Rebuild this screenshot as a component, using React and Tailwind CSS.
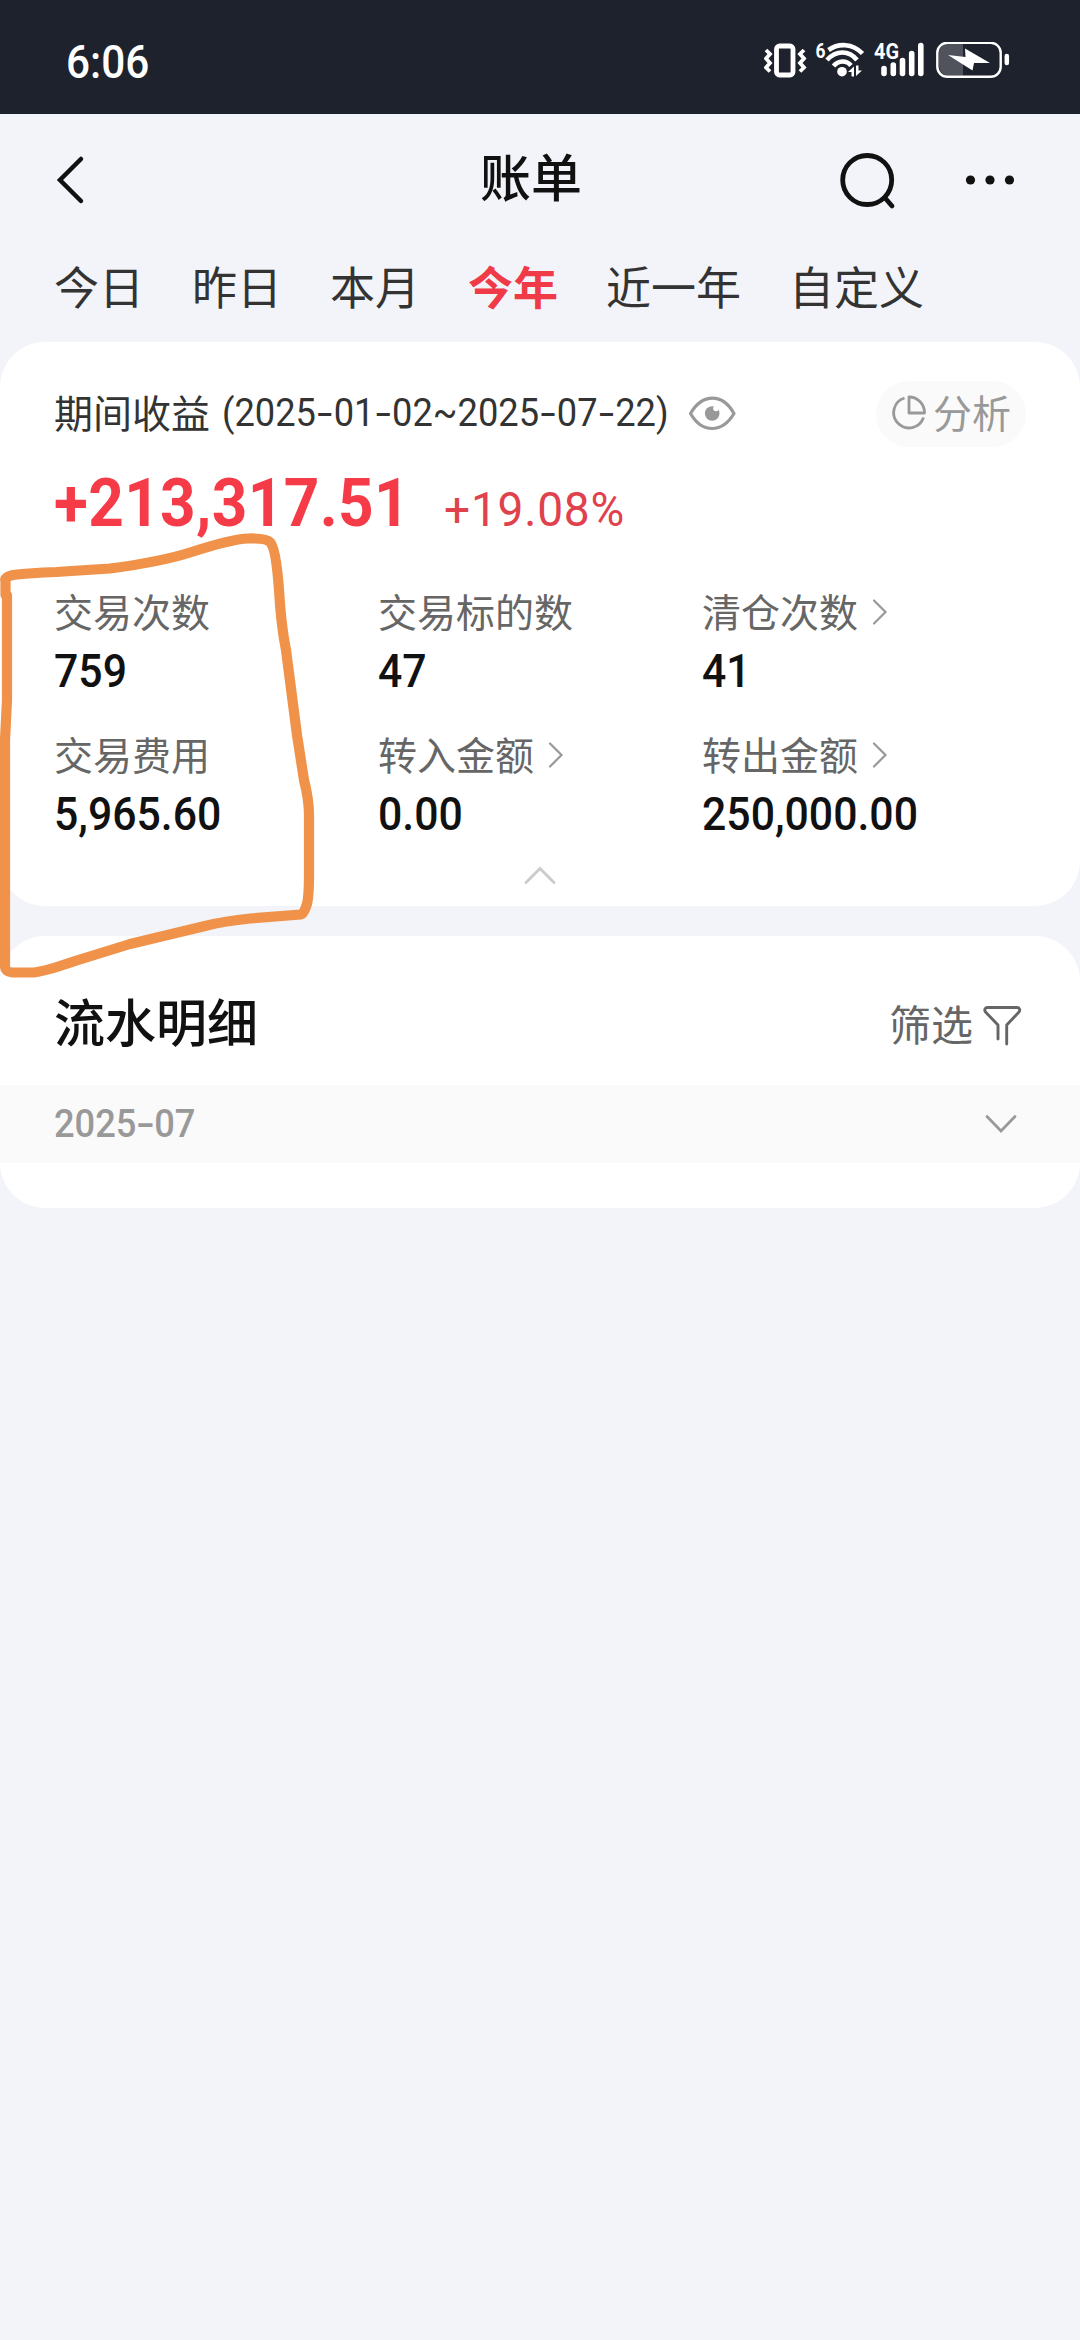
import React from "react";

const TABS = ["今日", "昨日", "本月", "今年", "近一年", "自定义"];
const STATS = [
  { label: "交易次数", value: "759" },
  { label: "交易标的数", value: "47" },
  { label: "清仓次数", value: "41", link: true },
  { label: "交易费用", value: "5,965.60" },
  { label: "转入金额", value: "0.00", link: true },
  { label: "转出金额", value: "250,000.00", link: true },
];

function DateText({ text }) {
  return text.split("-").map((part, i) => (
    <React.Fragment key={i}>
      {i > 0 && <span className="inline-block w-[19px] scale-x-150 text-center">-</span>}
      {part}
    </React.Fragment>
  ));
}

function StatusIcons() {
  return (
    <svg className="h-9 w-[246px]" viewBox="764 42 246 36" fill="none" stroke="#fff">
      <rect x="776.5" y="46" width="16.500" height="29" rx="3" strokeWidth="4.800" />
      <path d="M766 49.500l4 4-4 4.500 4 4.500-4 4.500 4 4M804 49.500l-4 4 4 4.500-4 4.500 4 4.500-4 4" strokeWidth="3.800" transform="translate(0 .5)" />
      <text x="815.5" y="57.500" fill="#fff" stroke="none" fontSize="20" fontWeight="700" textLength="10" lengthAdjust="spacingAndGlyphs" fontFamily="Roboto, sans-serif">6</text>
      <path d="M828.500 50c10-7 24-7 34 3.500M827 60c9-10 22-10 30 0M833.500 66c5-6 13-6 17.500-.5" strokeWidth="4.600" />
      <circle cx="842" cy="71.700" r="4.800" fill="#fff" stroke="none" />
      <path d="M848 72l6-5.500v10h-2.500v-4.500zM862 70.500l-6 5.500v-10.500h2.500v5z" fill="#fff" stroke="none" />
      <text x="874" y="59.300" fill="#fff" stroke="none" fontSize="22" fontWeight="700" textLength="25" lengthAdjust="spacingAndGlyphs" fontFamily="Roboto, sans-serif">4G</text>
      <path d="M884 68.500v5M893.300 65v8.500M902.500 60.500v13M911.700 53.500v20M920.800 45.500v28" strokeWidth="5.600" strokeLinecap="round" />
      <path d="M963 43.500h-15a9 9 0 0 0-9 9v14a9 9 0 0 0 9 9h15z" fill="#50535b" stroke="none" />
      <rect x="937.300" y="42.800" width="63.400" height="34" rx="10" strokeWidth="2.400" />
      <path d="M948 55l17.500 2-.5-8.500 25 14.500h-16l-1.500 7.500z" fill="#fff" stroke="none" />
      <path d="M1006.800 56v7" strokeWidth="4.500" strokeLinecap="round" />
    </svg>
  );
}

function StatusBar() {
  return (
    <div className="flex h-[114px] items-start justify-between bg-[#1e222d] pl-[66px] pr-[70px] text-white">
      <span className="mt-[35px] origin-left scale-x-[0.92] font-['Roboto'] text-[46px] leading-[54px] font-medium">6:06</span>
      <div className="mt-[42px]"><StatusIcons /></div>
    </div>
  );
}

function NavBar() {
  return (
    <div className="grid h-[132px] grid-cols-[480px_102px_1fr] items-center">
      <svg className="ml-[54px] h-[52px] w-[34px]" viewBox="54 154 34 52" fill="none" stroke="#111" strokeWidth="4.500" strokeLinecap="round">
        <path d="M81 159L60 180l21 21" />
      </svg>
      <h1 className="mb-[11px] text-[51px] leading-[60px] font-medium text-[#111]">账单</h1>
      <div className="flex items-center justify-end pr-[62px]">
        <svg className="h-[60px] w-[60px]" viewBox="838 150 60 60" fill="none" stroke="#111" strokeWidth="4.800" strokeLinecap="round">
          <circle cx="867.200" cy="180" r="24.500" />
          <path d="M885.500 198.500l6.500 7.500" />
        </svg>
        <svg className="ml-[66px] h-3 w-[54px]" viewBox="964 174 54 12" fill="#111">
          <circle cx="970.500" cy="180" r="4.600" />
          <circle cx="990" cy="180" r="4.600" />
          <circle cx="1009.500" cy="180" r="4.600" />
        </svg>
      </div>
    </div>
  );
}

function Tabs() {
  return (
    <nav className="flex h-24 gap-12 px-[54px] pt-[7px] text-[45px] leading-[66px] text-[#333]">
      {TABS.map((tab) => (
        <span key={tab} className={tab === "今年" ? "font-bold text-[#f03a47]" : ""}>{tab}</span>
      ))}
    </nav>
  );
}

function Stat({ label, value, link }) {
  return (
    <div className="h-[143px]">
      <div className="flex h-[52px] items-center gap-[14px] text-[39px] leading-[52px] text-[#666]">
        <span className="mb-[3px]">{label}</span>
        {link && (
          <svg className="mt-[2px] h-7 w-4" viewBox="0 0 16 28" fill="none" stroke="#999" strokeWidth="2.200" strokeLinecap="round">
            <path d="M2 2.500L13.500 14 2 25.500" />
          </svg>
        )}
      </div>
      <div className="mt-[7px] w-fit origin-left scale-x-[0.93] font-['Roboto'] text-[46px] leading-[54px] font-medium text-[#111]">{value}</div>
    </div>
  );
}

function SummaryCard() {
  return (
    <section className="h-[564px] rounded-[45px] bg-white px-[54px] pt-[39px]">
      <div className="flex h-[65px] items-center text-[39px] leading-[52px] text-[#333]">
        <span className="mb-[6px]">期间收益</span>
        <span className="mb-[2px] ml-[12px] w-[468px] origin-left scale-x-[0.93] font-['Roboto'] font-[450] whitespace-nowrap">
          (<DateText text="2025-01-02" />~<DateText text="2025-07-22" />)
        </span>
        <svg className="-ml-[3px] h-9 w-[50px] shrink-0" viewBox="687 395 50 36" fill="none" stroke="#999" strokeWidth="3.200">
          <path d="M690.500 412.500c12-20.500 32-20.500 43.500 0-12 20-32 20-43.500 0z" strokeLinejoin="round" />
          <circle cx="712.200" cy="412.500" r="7.300" fill="#999" stroke="none" />
          <circle cx="716" cy="407.500" r="2.800" fill="#fff" stroke="none" />
        </svg>
        <button className="ml-auto flex h-[66px] w-[150px] shrink-0 items-center gap-[7px] rounded-full bg-[#fafafa] pl-[14px] text-[39px] text-[#999]">
          <svg className="mb-[3px] h-9 w-9 shrink-0" viewBox="890 393 36 36" fill="none" stroke="#999" strokeWidth="2.800">
            <path d="M904.500 397a15.300 15.300 0 1 0 19 19.500" />
            <path d="M909 396v16h15.500a15.500 15.500 0 0 0-15.500-16z" strokeLinejoin="round" />
          </svg>
          <span className="mb-[6px] whitespace-nowrap">分析</span>
        </button>
      </div>
      <div className="flex h-[105px] items-baseline pt-[19px] font-['Roboto'] text-[#f53b47]">
        <span className="w-[390px] origin-left scale-x-[0.94] text-[66px] leading-[78px] font-bold tracking-[0.4px]">+213,317.51</span>
        <span className="origin-left scale-x-[0.96] text-[48px] tracking-[0.8px] text-[#e0424d]">+19.08%</span>
      </div>
      <div className="mt-[34px] grid grid-cols-3">
        {STATS.map((s) => <Stat key={s.label} {...s} />)}
      </div>
      <svg className="mx-auto -mt-[6px] h-5 w-9" viewBox="523 865 36 20" fill="none" stroke="#ccc" strokeWidth="3" strokeLinecap="round">
        <path d="M527 882.500L541 868.500 555 882.500" />
      </svg>
    </section>
  );
}

function DetailCard() {
  return (
    <section className="mt-[30px] h-[272px] rounded-[45px] bg-white">
      <div className="flex h-[149px] items-center justify-between pr-[58px] pl-[54px] pt-7">
        <h2 className="mb-[9px] text-[51px] leading-[60px] font-medium text-[#111]">流水明细</h2>
        <div className="flex items-center gap-[9px] text-[42px] leading-[60px] text-[#666]">
          <span className="mb-[4px]">筛选</span>
          <svg className="h-11 w-10" viewBox="981 1003 40 44" fill="none" stroke="#666" strokeWidth="2.900" strokeLinecap="round" strokeLinejoin="round">
            <path d="M997 1039v-14l-12.500-13c-1.500-2-.5-4.500 2-4.500h29.500c2.500 0 3.500 2.500 2 4.500l-12.300 13v19" />
          </svg>
        </div>
      </div>
      <div className="flex h-[78px] items-center justify-between bg-[#fafafa] pr-[61px] pl-[54px]">
        <span className="mt-[1px] origin-left scale-x-[0.93] font-['Roboto'] text-[39px] font-medium text-[#999]"><DateText text="2025-07" /></span>
        <svg className="h-5 w-9" viewBox="983 1114 36 20" fill="none" stroke="#999" strokeWidth="2.800" strokeLinecap="round">
          <path d="M987 1116.500L1001 1131 1015 1116.500" />
        </svg>
      </div>
    </section>
  );
}

function HandDrawnMark() {
  return (
    <svg className="pointer-events-none absolute top-[520px] left-0 h-[470px] w-[330px]" viewBox="0 520 330 470" fill="none" stroke="#f0924a" strokeWidth="10.200" strokeLinecap="round" strokeLinejoin="round">
      <path d="M5.500 595V581Q4 577 13 575Q30 573 56 572L110 568.500Q160 562 190 552.500Q232 539 248 538.500Q266 538 270 542Q276 548 279 590Q281 625 286 650L297 735L304 780Q309 800 309 815V875Q309 896 307 904Q304 914 301 914.500L250 918.500Q225 921 205 926L130 944L75 961Q43 972 33 972.500H12Q5 972 5 966V740L7 700V595" />
    </svg>
  );
}

export default function App() {
  return (
    <main className="relative h-[2340px] w-[1080px] overflow-hidden bg-[#f3f4f9] font-['Noto_Sans_CJK_SC',sans-serif]">
      <StatusBar />
      <NavBar />
      <Tabs />
      <SummaryCard />
      <DetailCard />
      <HandDrawnMark />
    </main>
  );
}
